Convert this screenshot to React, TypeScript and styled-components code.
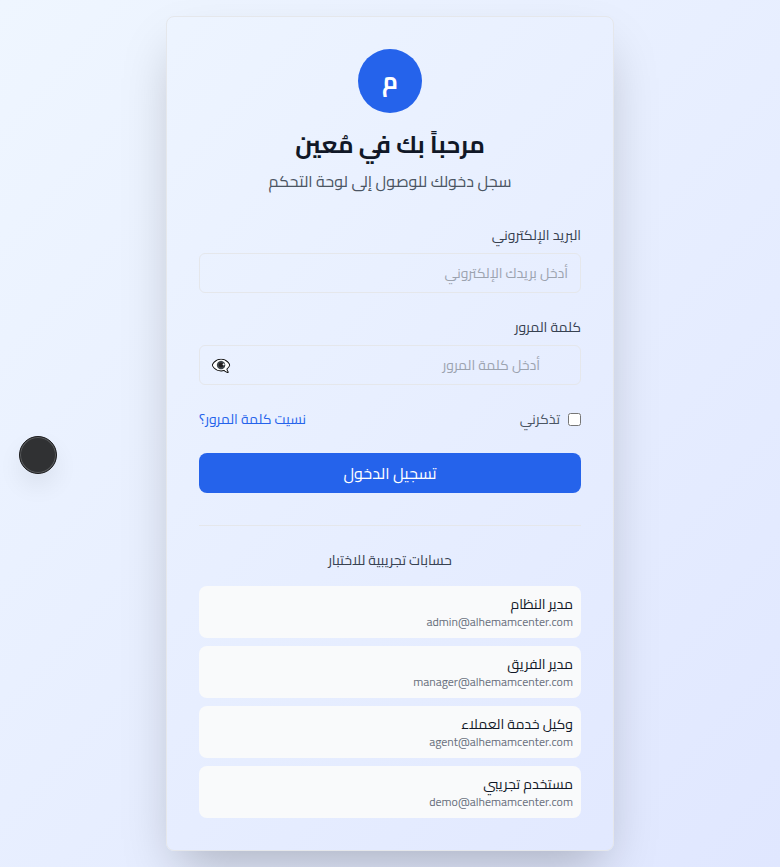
import React from "react";
import styled, { createGlobalStyle } from "styled-components";

const GlobalStyle = createGlobalStyle`
  *, *::before, *::after { box-sizing: border-box; }
  body { margin: 0; font-family: Cairo, "Noto Sans", sans-serif; color: #111827; }
  h1, p { margin: 0; }
  button, input { font: inherit; }
`;

const Page = styled.main`
  min-height: 100vh;
  padding: 16px;
  display: flex;
  align-items: center;
  justify-content: center;
  background: linear-gradient(to bottom right, #eff6ff, #e0e7ff);
`;

const Card = styled.section`
  width: 100%;
  max-width: 448px;
  padding: 32px;
  border: 1px solid #e5e7eb;
  border-radius: 8px;
  box-shadow: 0 25px 50px -12px rgba(0, 0, 0, 0.25);
`;

const Header = styled.header`
  display: flex;
  flex-direction: column;
  align-items: center;
  margin-bottom: 32px;
`;

const Logo = styled.div`
  width: 64px;
  height: 64px;
  margin-bottom: 16px;
  display: flex;
  align-items: center;
  justify-content: center;
  border-radius: 50%;
  background: #2563eb;
  color: #fff;
  font-size: 24px;
  line-height: 32px;
  font-weight: 700;
`;

const Title = styled.h1`
  margin-bottom: 8px;
  font-size: 24px;
  line-height: 32px;
  font-weight: 700;
`;

const Subtitle = styled.p`
  font-size: 16px;
  line-height: 24px;
  color: #4b5563;
`;

const Form = styled.form`
  display: flex;
  flex-direction: column;
  gap: 24px;
`;

const Field = styled.div`
  display: flex;
  flex-direction: column;
  gap: 8px;
`;

const Label = styled.label`
  font-size: 14px;
  line-height: 20px;
  color: #374151;
`;

const InputWrap = styled.div`
  position: relative;
  display: flex;
`;

const Input = styled.input<{ $inset?: boolean }>`
  width: 100%;
  height: 40px;
  padding: 8px ${(p) => (p.$inset ? 40 : 12)}px;
  border: 1px solid #e5e7eb;
  border-radius: 6px;
  background: transparent;
  font-size: 14px;
  line-height: 20px;
  outline: none;
  &::placeholder { color: #9ca3af; opacity: 1; }
`;

const Reveal = styled.button`
  position: absolute;
  left: 12px;
  top: 8px;
  padding: 0;
  border: 0;
  background: none;
  color: #9ca3af;
  font-size: 16px;
  line-height: 24px;
`;

const Options = styled.div`
  display: flex;
  align-items: center;
  justify-content: space-between;
  font-size: 14px;
  line-height: 20px;
`;

const Remember = styled.label`
  display: flex;
  align-items: center;
  gap: 8px;
  color: #4b5563;
`;

const Checkbox = styled.input`
  width: 13px;
  height: 13px;
  margin: 0;
`;

const Forgot = styled.a`
  color: #2563eb;
  text-decoration: none;
`;

const Submit = styled.button`
  height: 40px;
  padding: 0;
  border: 0;
  border-radius: 8px;
  background: #2563eb;
  color: #fff;
  font-size: 16px;
  line-height: 24px;
`;

const Demo = styled.div`
  margin-top: 32px;
  padding-top: 24px;
  border-top: 1px solid #e5e7eb;
`;

const DemoTitle = styled.p`
  margin-bottom: 16px;
  text-align: center;
  font-size: 14px;
  line-height: 20px;
  color: #374151;
`;

const Accounts = styled.div`
  display: flex;
  flex-direction: column;
  gap: 8px;
`;

const Account = styled.button`
  padding: 8px;
  border: 0;
  border-radius: 8px;
  background: #f9fafb;
  text-align: right;
  color: #111827;
`;

const Role = styled.div`
  font-size: 14px;
  line-height: 20px;
`;

const Email = styled.div`
  font-size: 12px;
  line-height: 16px;
  color: #6b7280;
`;

const FloatingDot = styled.div`
  position: fixed;
  left: 19px;
  top: 436px;
  width: 38px;
  height: 38px;
  border-radius: 50%;
  border: 1px solid #1b1b1d;
  background: #303133;
  box-shadow: inset 0 0 0 1px #5a5c5e, 0 12px 24px rgba(0, 0, 0, 0.07);
`;

const accounts = [
  ["مدير النظام", "admin@alhemamcenter.com"],
  ["مدير الفريق", "manager@alhemamcenter.com"],
  ["وكيل خدمة العملاء", "agent@alhemamcenter.com"],
  ["مستخدم تجريبي", "demo@alhemamcenter.com"],
];

export default function App() {
  return (
    <Page dir="rtl" lang="ar">
      <GlobalStyle />
      <Card>
        <Header>
          <Logo>م</Logo>
          <Title>مرحباً بك في مُعين</Title>
          <Subtitle>سجل دخولك للوصول إلى لوحة التحكم</Subtitle>
        </Header>
        <Form onSubmit={(e) => e.preventDefault()}>
          <Field>
            <Label htmlFor="email">البريد الإلكتروني</Label>
            <Input id="email" type="email" placeholder="أدخل بريدك الإلكتروني" />
          </Field>
          <Field>
            <Label htmlFor="password">كلمة المرور</Label>
            <InputWrap>
              <Input id="password" type="password" $inset placeholder="أدخل كلمة المرور" />
              <Reveal type="button">👁️‍🗨️</Reveal>
            </InputWrap>
          </Field>
          <Options>
            <Remember>
              <Checkbox type="checkbox" />
              <span>تذكرني</span>
            </Remember>
            <Forgot href="#">نسيت كلمة المرور؟</Forgot>
          </Options>
          <Submit type="submit">تسجيل الدخول</Submit>
        </Form>
        <Demo>
          <DemoTitle>حسابات تجريبية للاختبار</DemoTitle>
          <Accounts>
            {accounts.map(([role, email]) => (
              <Account key={email} type="button">
                <Role>{role}</Role>
                <Email>{email}</Email>
              </Account>
            ))}
          </Accounts>
        </Demo>
      </Card>
      <FloatingDot />
    </Page>
  );
}
